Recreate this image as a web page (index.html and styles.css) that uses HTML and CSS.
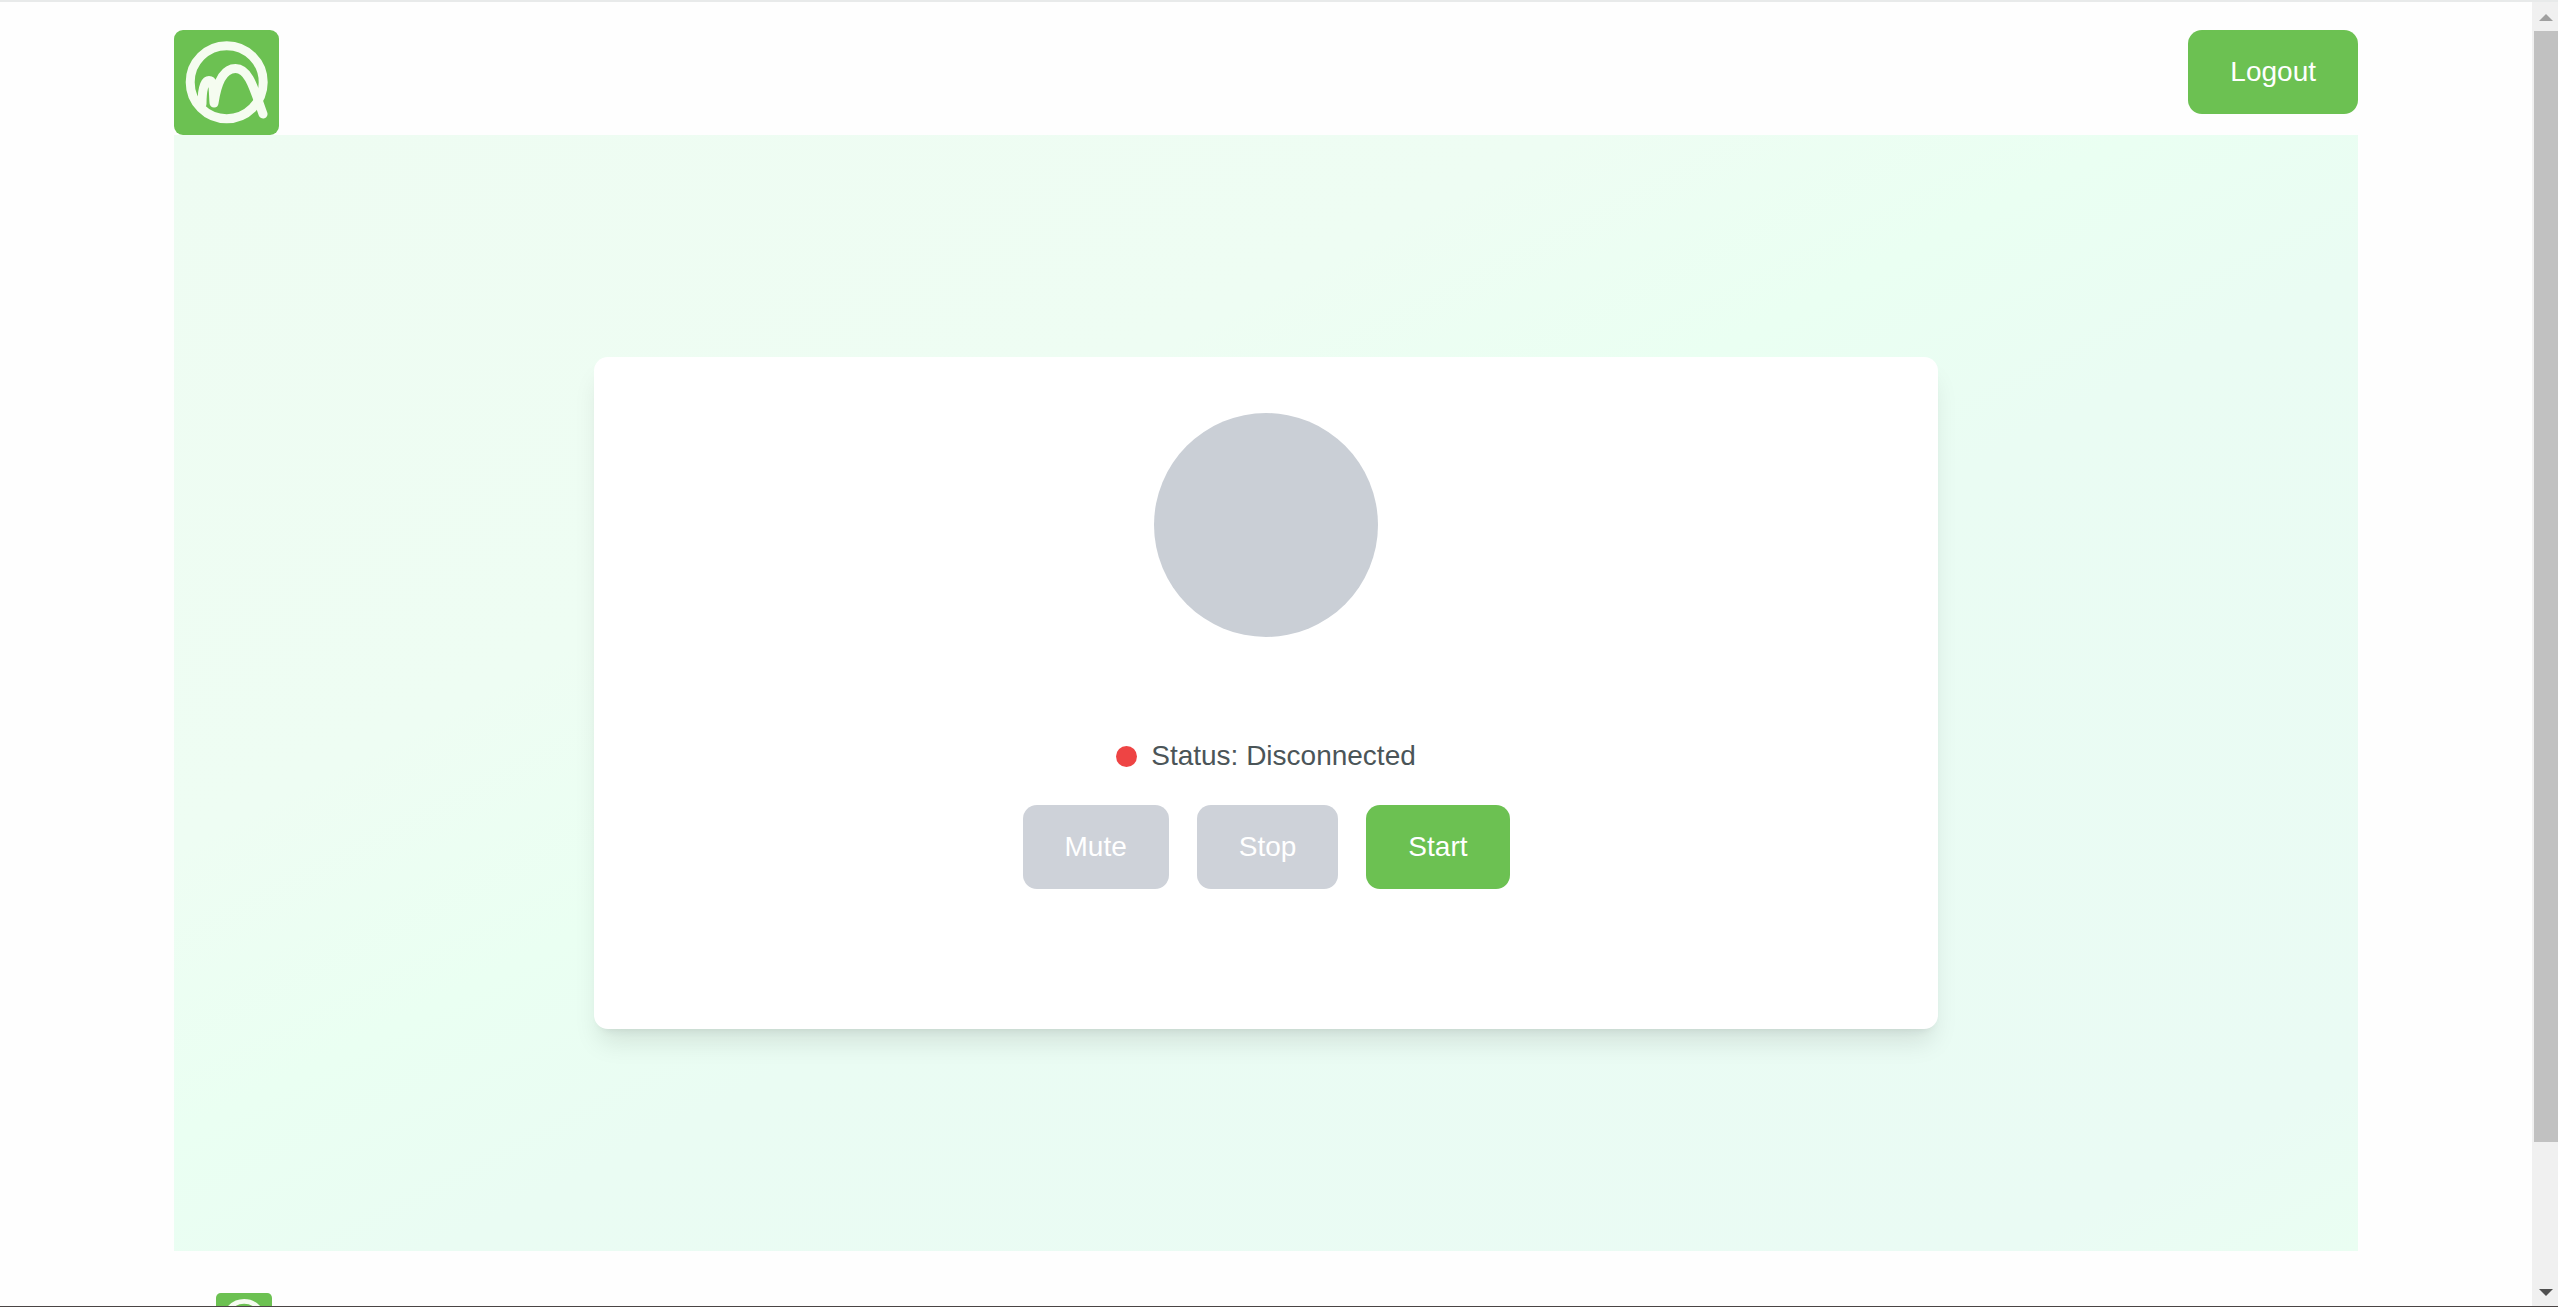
FILE: index.html
```html
<!DOCTYPE html>
<html lang="en">

<head>
    <meta charset="UTF-8">
    <meta name="viewport" content="width=device-width, initial-scale=1.0">
    <title>Voice session</title>
    <link rel="stylesheet" href="styles.css">
</head>

<body>
    <svg class="sprite" aria-hidden="true">
        <symbol id="logo" viewBox="0 0 105 105">
            <rect width="105" height="105" rx="9" fill="#6cc152" />
            <g fill="none" stroke="#f5fcf0" stroke-width="9" stroke-linecap="round" stroke-linejoin="round">
                <circle cx="52.7" cy="52.2" r="36.5" />
                <path d="M28 74C28 61 30 50.500 35 50.500C40 50.500 39 60 40 73C43 53 49 38.500 61.500 38.500C75 38.500 80 59 89 84" />
            </g>
        </symbol>
    </svg>

    <div class="page">
        <div class="container">
            <header class="header">
                <a href="#" class="logo" aria-label="Home">
                    <svg><use href="#logo" /></svg>
                </a>
                <button class="btn" type="button">Logout</button>
            </header>

            <main class="stage">
                <section class="card">
                    <div class="orb"></div>
                    <div class="status">
                        <span class="status-dot"></span>
                        <span>Status: Disconnected</span>
                    </div>
                    <div class="controls">
                        <button class="btn" type="button" disabled>Mute</button>
                        <button class="btn" type="button" disabled>Stop</button>
                        <button class="btn" type="button">Start</button>
                    </div>
                </section>
            </main>

            <footer class="footer">
                <a href="#" class="logo logo-small" aria-label="Home">
                    <svg><use href="#logo" /></svg>
                </a>
            </footer>
        </div>
    </div>

    <div class="scrollbar" aria-hidden="true">
        <svg class="arrow arrow-up" viewBox="0 0 14 7"><path d="M0 7L7 0L14 7Z" /></svg>
        <div class="track">
            <div class="thumb"></div>
        </div>
        <svg class="arrow arrow-down" viewBox="0 0 14 7"><path d="M0 0H14L7 7Z" /></svg>
    </div>
</body>

</html>
```

FILE: styles.css
```css
* {
    box-sizing: border-box;
}

body {
    display: flex;
    height: 100vh;
    margin: 0;
    overflow: hidden;
    border-top: 2px solid #e8eaea;
    border-bottom: 1px solid #4a4545;
    background-color: #fefefe;
    color: #4b5558;
    font-family: "Liberation Sans", Arial, sans-serif;
    font-size: 28px;
    line-height: 42px;
}

.sprite {
    position: absolute;
    width: 0;
    height: 0;
}

.page {
    flex: 1;
    overflow: hidden;
}

.container {
    max-width: 2184px;
    margin: 0 auto;
}

.header {
    display: flex;
    justify-content: space-between;
    align-items: flex-start;
    padding-top: 28px;
}

.logo {
    display: block;
    width: 105px;
    height: 105px;
}

.logo svg {
    display: block;
    width: 100%;
    height: 100%;
}

.logo-small {
    width: 56px;
    height: 56px;
}

.btn {
    padding: 21px 42px;
    border: none;
    border-radius: 14px;
    background-color: #6cc152;
    color: #fff;
    font: inherit;
    cursor: pointer;
}

.btn:disabled {
    background-color: #ced2d9;
    cursor: not-allowed;
}

.stage {
    display: flex;
    justify-content: center;
    padding: 222px 0;
    background: linear-gradient(to bottom right, #eefcf2, #eefdf3 32%, #eafff2 45%, #eafcf3 56%, #eafbf4 92%, #eafef2);
}

.card {
    display: flex;
    flex-direction: column;
    align-items: center;
    width: 100%;
    max-width: 1344px;
    padding: 56px 56px 140px;
    border-radius: 14px;
    background-color: #fff;
    box-shadow: 0 18px 26px -5px rgba(0, 0, 0, 0.1), 0 7px 10px -7px rgba(0, 0, 0, 0.1);
}

.orb {
    width: 224px;
    height: 224px;
    margin-bottom: 98px;
    border-radius: 50%;
    background-color: #cacfd6;
}

.status {
    display: flex;
    align-items: center;
    gap: 14px;
    margin-bottom: 28px;
}

.status-dot {
    width: 21px;
    height: 21px;
    border-radius: 50%;
    background-color: #ee4444;
}

.controls {
    display: flex;
    gap: 28px;
}

.footer {
    padding: 42px;
}

/* Scrollbar */
.scrollbar {
    display: flex;
    flex-direction: column;
    align-items: center;
    width: 26px;
    padding: 12px 0 10px 2px;
    background-color: #f0f0f0;
}

.arrow {
    width: 14px;
    height: 7px;
}

.arrow-up {
    fill: #a0a0a0;
}

.arrow-down {
    fill: #505050;
}

.track {
    flex: 1;
    align-self: stretch;
    padding: 10px 0;
}

.thumb {
    height: 89%;
    background-color: #c1c1c1;
}
```
